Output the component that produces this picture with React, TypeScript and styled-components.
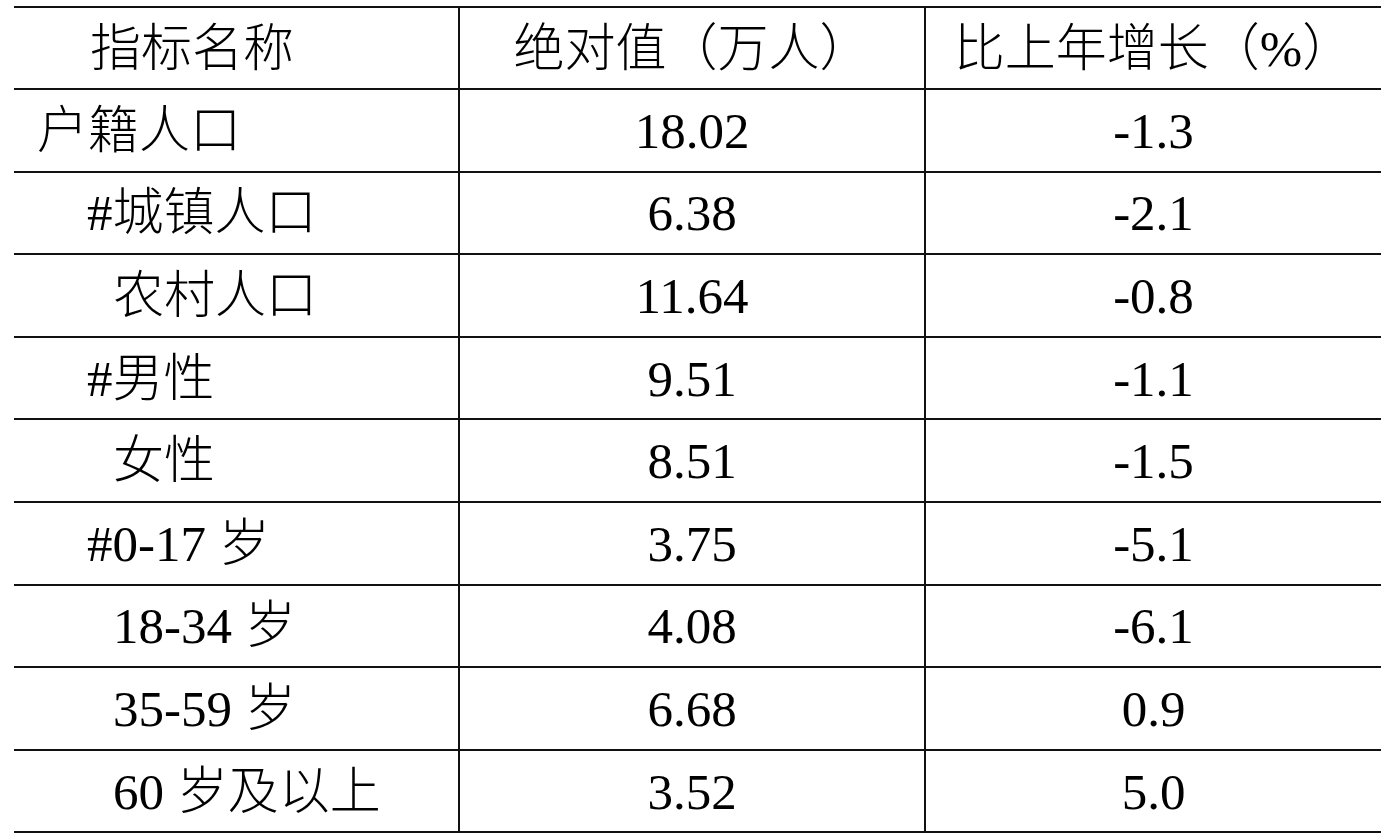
import styled, { createGlobalStyle } from "styled-components";

const GlobalStyle = createGlobalStyle`
html, body {
  margin: 0;
  padding: 0;
  background: #ffffff;
}
body {
  font-family: "Liberation Serif", "Noto Sans CJK SC", serif;
  color: #000000;
}
`

const Page = styled.div`
padding: 6px 0 0 14px;
`

const Table = styled.div`
display: grid;
grid-template-columns: 444px 466px 457px;
grid-template-rows: 84px;
grid-auto-rows: 82.6px;
`

const Cell = styled.div<{ $col: number; $head?: boolean; $indent?: number }>`
box-sizing: border-box;
display: flex;
align-items: center;
justify-content: ${(p) => (p.$col === 0 ? "flex-start" : "center")};
padding-left: ${(p) => (p.$col === 0 ? `${p.$indent ?? 0}px` : "0")};
padding-top: 2px;
border-bottom: 2px solid #111;
border-top: ${(p) => (p.$head ? "2px solid #111" : "none")};
border-left: ${(p) => (p.$col === 0 ? "none" : "2px solid #111")};
font-size: 51px;
font-weight: 300;
line-height: 1;
white-space: pre;
`

type Row = { name: string; value: string; change: string; indent: number };

// indent: 0 top level, 1 "#" sub rows, 2 second sub rows
const indents = [23, 73, 99];

const rows: Row[] = [
    { name: "户籍人口", value: "18.02", change: "-1.3", indent: 0 },
    { name: "#城镇人口", value: "6.38", change: "-2.1", indent: 1 },
    { name: "农村人口", value: "11.64", change: "-0.8", indent: 2 },
    { name: "#男性", value: "9.51", change: "-1.1", indent: 1 },
    { name: "女性", value: "8.51", change: "-1.5", indent: 2 },
    { name: "#0-17 岁", value: "3.75", change: "-5.1", indent: 1 },
    { name: "18-34 岁", value: "4.08", change: "-6.1", indent: 2 },
    { name: "35-59 岁", value: "6.68", change: "0.9", indent: 2 },
    { name: "60 岁及以上", value: "3.52", change: "5.0", indent: 2 },
];

export default function App() {
    return (
        <>
            <GlobalStyle />
            <Page>
                <Table>
                    <Cell $col={0} $head $indent={76}>指标名称</Cell>
                    <Cell $col={1} $head>绝对值（万人）</Cell>
                    <Cell $col={2} $head>比上年增长（%）</Cell>
                    {rows.map((row, i) => [
                        <Cell key={`n${i}`} $col={0} $indent={indents[row.indent]}>{row.name}</Cell>,
                        <Cell key={`v${i}`} $col={1}>{row.value}</Cell>,
                        <Cell key={`c${i}`} $col={2}>{row.change}</Cell>,
                    ])}
                </Table>
            </Page>
        </>
    )
}
